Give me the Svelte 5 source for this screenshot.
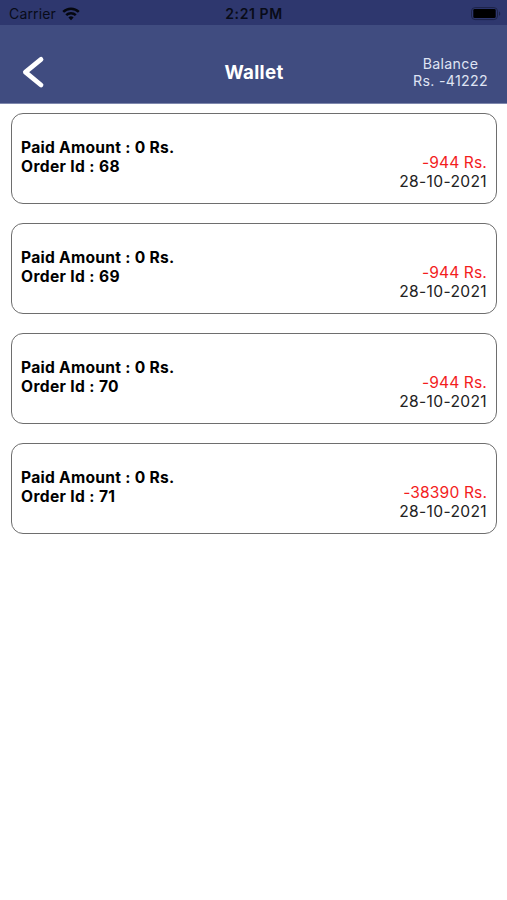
<script>
  const balance = -41222;

  const transactions = [
    { orderId: 68, paid: 0, amount: -944, date: '28-10-2021' },
    { orderId: 69, paid: 0, amount: -944, date: '28-10-2021' },
    { orderId: 70, paid: 0, amount: -944, date: '28-10-2021' },
    { orderId: 71, paid: 0, amount: -38390, date: '28-10-2021' }
  ];
</script>

<div class="screen">
  <div class="status-bar">
    <div class="carrier">
      <span>Carrier</span>
      <svg class="wifi" width="18" height="14" viewBox="0 0 18 14" aria-hidden="true">
        <path d="M1.2 4.9a11.2 11.2 0 0 1 15.6 0" />
        <path d="M4.2 8.1a6.9 6.9 0 0 1 9.6 0" />
        <path class="dot" d="M9 13.2l-2.6-2.7a3.8 3.8 0 0 1 5.2 0z" />
      </svg>
    </div>
    <div class="time">2:21 PM</div>
    <div class="power">
      <svg width="32" height="14" viewBox="0 0 32 14" aria-hidden="true">
        <rect class="shell" x="1.5" y="0.6" width="26" height="12" rx="3.6" />
        <rect x="3.3" y="2.1" width="22.4" height="9" rx="1.4" />
        <path class="cap" d="M29 4.4c1.6.6 1.6 3.8 0 4.4z" />
      </svg>
    </div>
  </div>

  <header class="header">
    <button class="back" aria-label="Back">
      <svg width="24" height="34" viewBox="0 0 24 34">
        <path d="M19 3.4L3.4 16.2L19 29" />
      </svg>
    </button>
    <h1>Wallet</h1>
    <div class="balance">
      <div>Balance</div>
      <div>Rs. {balance}</div>
    </div>
  </header>

  <main class="list">
    {#each transactions as item}
      <div class="card">
        <div class="order">
          <div>Paid Amount : {item.paid} Rs.</div>
          <div class="order-id">Order Id : {item.orderId}</div>
        </div>
        <div class="detail">
          <div class="amount">{item.amount} Rs.</div>
          <div class="date">{item.date}</div>
        </div>
      </div>
    {/each}
  </main>
</div>

<style>
  :global(body) {
    margin: 0;
    background: #fff;
  }

  .screen {
    width: 100%;
    min-height: 900px;
    font-family: Inter, "Liberation Sans", sans-serif;
    color: #000;
    background: #fff;
  }

  .status-bar {
    display: grid;
    grid-template-columns: 1fr auto 1fr;
    align-items: center;
    box-sizing: border-box;
    height: 25px;
    padding: 2px 5px 0 9px;
    background: #2e376e;
    color: #080b18;
    font-size: 14px;
    line-height: 20px;
  }

  .carrier {
    display: flex;
    align-items: center;
    gap: 6px;
    letter-spacing: 0.15px;
  }

  .wifi path {
    fill: none;
    stroke: #05070f;
    stroke-width: 2.5;
  }

  .wifi .dot {
    fill: #05070f;
    stroke: none;
  }

  .time {
    margin-right: 3px;
    font-size: 14px;
    font-weight: 600;
    letter-spacing: 0.6px;
  }

  .power {
    display: flex;
    justify-content: flex-end;
  }

  .shell {
    fill: none;
    stroke: #1d2348;
    stroke-width: 1;
  }

  .cap {
    fill: #1d2348;
  }

  .header {
    display: grid;
    grid-template-columns: 1fr auto 1fr;
    align-items: center;
    box-sizing: border-box;
    height: 79px;
    padding: 17px 19px 0 22px;
    background: #404c80;
    border-bottom: 1px solid #7f88ad;
    color: #fff;
  }

  .back {
    display: flex;
    justify-self: start;
    padding: 0;
    border: 0;
    background: none;
  }

  .back path {
    fill: none;
    stroke: #fff;
    stroke-width: 4.8;
    stroke-linecap: round;
    stroke-linejoin: round;
  }

  h1 {
    margin: 0 2px 0 0;
    font-size: 18.7px;
    font-weight: 700;
    line-height: 24px;
    letter-spacing: 0.3px;
  }

  .balance {
    justify-self: end;
    padding-bottom: 1px;
    color: #dfe3f3;
    font-size: 14.2px;
    line-height: 17px;
    letter-spacing: 0.32px;
    text-align: center;
  }

  .list {
    display: flex;
    flex-direction: column;
    gap: 19px;
    padding: 9px 10px 0 11px;
  }

  .card {
    display: flex;
    justify-content: space-between;
    align-items: center;
    box-sizing: border-box;
    height: 91px;
    padding: 0 9px;
    border: 1px solid #6e6e6e;
    border-radius: 12px;
    font-size: 15.6px;
    line-height: 19px;
  }

  .order {
    padding-bottom: 3px;
    font-weight: 700;
    letter-spacing: 0.27px;
  }

  .order-id {
    letter-spacing: 0.36px;
  }

  .detail {
    align-self: flex-end;
    padding-bottom: 12px;
    text-align: right;
  }

  .amount {
    color: #f31d1d;
    letter-spacing: 0.12px;
  }

  .date {
    color: #222;
    letter-spacing: 0.35px;
  }
</style>
